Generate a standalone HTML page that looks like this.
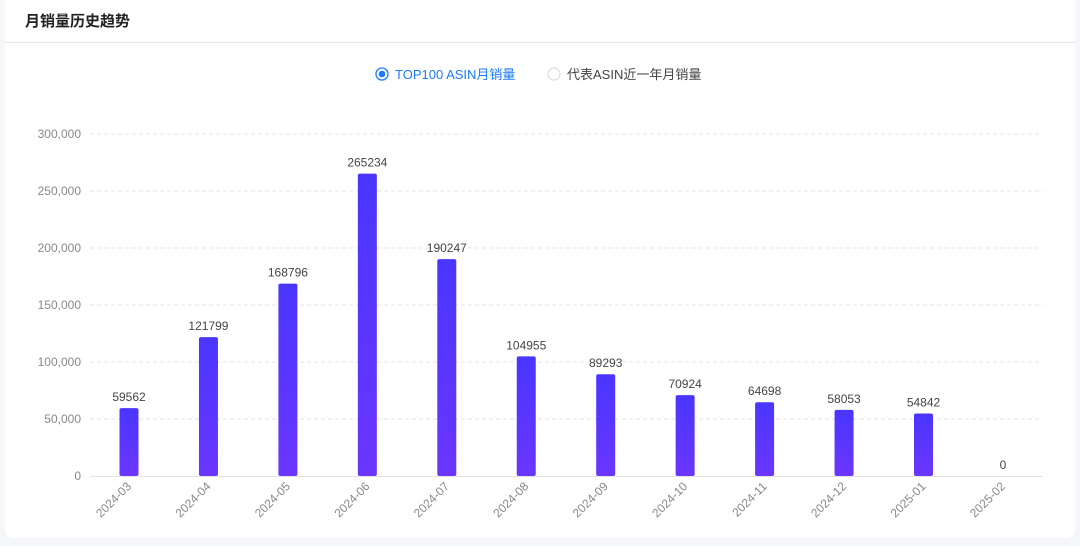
<!DOCTYPE html>
<html><head><meta charset="utf-8"><style>
body{margin:0;width:1080px;height:546px;background:#f4f6fa;font-family:"Liberation Sans","Noto Sans CJK SC",sans-serif;overflow:hidden;position:relative}
.card{position:absolute;left:5px;top:0;width:1070px;height:538px;background:#fff;border-radius:0 0 8px 8px}
.title{position:absolute;left:25px;top:10px;font-size:15px;font-weight:bold;color:#222}
.hr{position:absolute;left:5px;right:5px;top:42px;height:1px;background:#e8e8e8}
</style></head><body>
<div class="card"></div>
<div class="title">月销量历史趋势</div>
<div class="hr"></div>
<svg width="1080" height="546" style="position:absolute;left:0;top:0" font-family="Liberation Sans, Noto Sans CJK SC, sans-serif">
<defs><linearGradient id="g" x1="0" y1="0" x2="0" y2="1"><stop offset="0" stop-color="#4a36ff"/><stop offset="1" stop-color="#6a36ff"/></linearGradient></defs>
<circle cx="382" cy="74" r="6" fill="none" stroke="#1a7bff" stroke-width="1.3"/><circle cx="382" cy="74" r="3.3" fill="#1a7bff"/>
<text x="395" y="79" font-size="13" fill="#1a7bff">TOP100 ASIN月销量</text>
<circle cx="554" cy="74" r="6" fill="none" stroke="#ddd" stroke-width="1.2"/>
<text x="567" y="79" font-size="13" fill="#444">代表ASIN近一年月销量</text>
<g stroke="#e3e3e3" stroke-dasharray="4,3" stroke-width="1">
<line x1="90" y1="134" x2="1043" y2="134"/><line x1="90" y1="191" x2="1043" y2="191"/><line x1="90" y1="248" x2="1043" y2="248"/><line x1="90" y1="305" x2="1043" y2="305"/><line x1="90" y1="362" x2="1043" y2="362"/><line x1="90" y1="419" x2="1043" y2="419"/>
</g>
<line x1="90" y1="476.5" x2="1043" y2="476.5" stroke="#e3e3e3"/>
<g font-size="12" fill="#888" text-anchor="end">
<text x="81" y="138">300,000</text><text x="81" y="195">250,000</text><text x="81" y="252">200,000</text><text x="81" y="309">150,000</text><text x="81" y="366">100,000</text><text x="81" y="423">50,000</text><text x="81" y="480">0</text>
</g>
<g id="bars" fill="url(#g)"></g>
<g id="vals" font-size="12" fill="#444" text-anchor="middle"></g>
<g id="xl" font-size="12" fill="#888" text-anchor="end"></g>
</svg>
<script>
var v=[59562,121799,168796,265234,190247,104955,89293,70924,64698,58053,54842,0];
var m=["2024-03","2024-04","2024-05","2024-06","2024-07","2024-08","2024-09","2024-10","2024-11","2024-12","2025-01","2025-02"];
var ns="http://www.w3.org/2000/svg",b=document.getElementById("bars"),vl=document.getElementById("vals"),xl=document.getElementById("xl");
for(var i=0;i<12;i++){var cx=129+i*79.45,h=v[i]*342/300000;
if(h>0){var r=document.createElementNS(ns,"rect");r.setAttribute("x",cx-9.5);r.setAttribute("y",476-h);r.setAttribute("width",19);r.setAttribute("height",h);r.setAttribute("rx",2);b.appendChild(r);}
var t=document.createElementNS(ns,"text");t.setAttribute("x",cx);t.setAttribute("y",476-h-7);t.textContent=v[i];vl.appendChild(t);
var l=document.createElementNS(ns,"text");l.setAttribute("transform","translate("+(cx+3)+",487) rotate(-45)");l.textContent=m[i];xl.appendChild(l);}
</script>
</body></html>
